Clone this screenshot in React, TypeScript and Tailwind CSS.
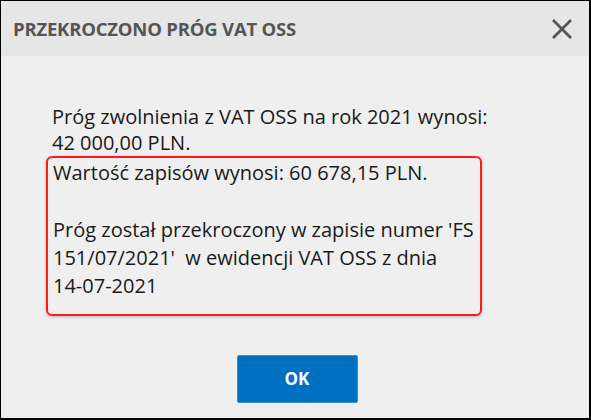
export default function App() {
  return (
    <div
      className="w-[591px] h-[420px] bg-[#efefef] border border-black border-r-2 border-b-2 flex flex-col"
      style={{ fontFamily: "'Open Sans', 'Noto Sans', sans-serif" }}
    >
      <div className="h-[55px] bg-[#e6e6e6] flex items-center justify-between pl-3 pr-[17px] shrink-0">
        <h1 className="text-[18.5px] font-bold text-[#555555] tracking-[-0.2px]">
          PRZEKROCZONO PRÓG VAT OSS
        </h1>
        <svg width="20" height="20" viewBox="0 0 20 20" className="text-[#555555]">
          <path d="M2 2 L18 18 M18 2 L2 18" stroke="currentColor" strokeWidth="2.8" strokeLinecap="square" fill="none" />
        </svg>
      </div>

      <div className="flex-1 flex flex-col px-[45px] pt-[48px] text-[20px] leading-[26px] text-[#1a1a1a]">
        <div className="px-[6px]">
          <p className="whitespace-nowrap">Próg zwolnienia z VAT OSS na rok 2021 wynosi:</p>
          <p>42 000,00 PLN.</p>
        </div>
        <div className="w-[436px] h-[160px] border-2 border-[#ff1a1a] rounded-[6px] shadow-[0_1px_3px_rgba(0,0,0,0.25)] px-[5px] pt-[1px] leading-[28px]">
          <p className="whitespace-nowrap">Wartość zapisów wynosi: 60 678,15 PLN.</p>
          <p className="h-[29px]"></p>
          <p className="whitespace-nowrap">Próg został przekroczony w zapisie numer 'FS</p>
          <p className="whitespace-pre">151/07/2021'  w ewidencji VAT OSS z dnia</p>
          <p>14-07-2021</p>
        </div>
        <div className="flex justify-center mt-[39px] pl-[4px]">
          <button className="w-[121px] h-[48px] bg-[#0070c0] border border-[#3a8fd0] rounded-[2px] text-white text-[17px] font-bold">
            OK
          </button>
        </div>
      </div>
    </div>
  );
}
